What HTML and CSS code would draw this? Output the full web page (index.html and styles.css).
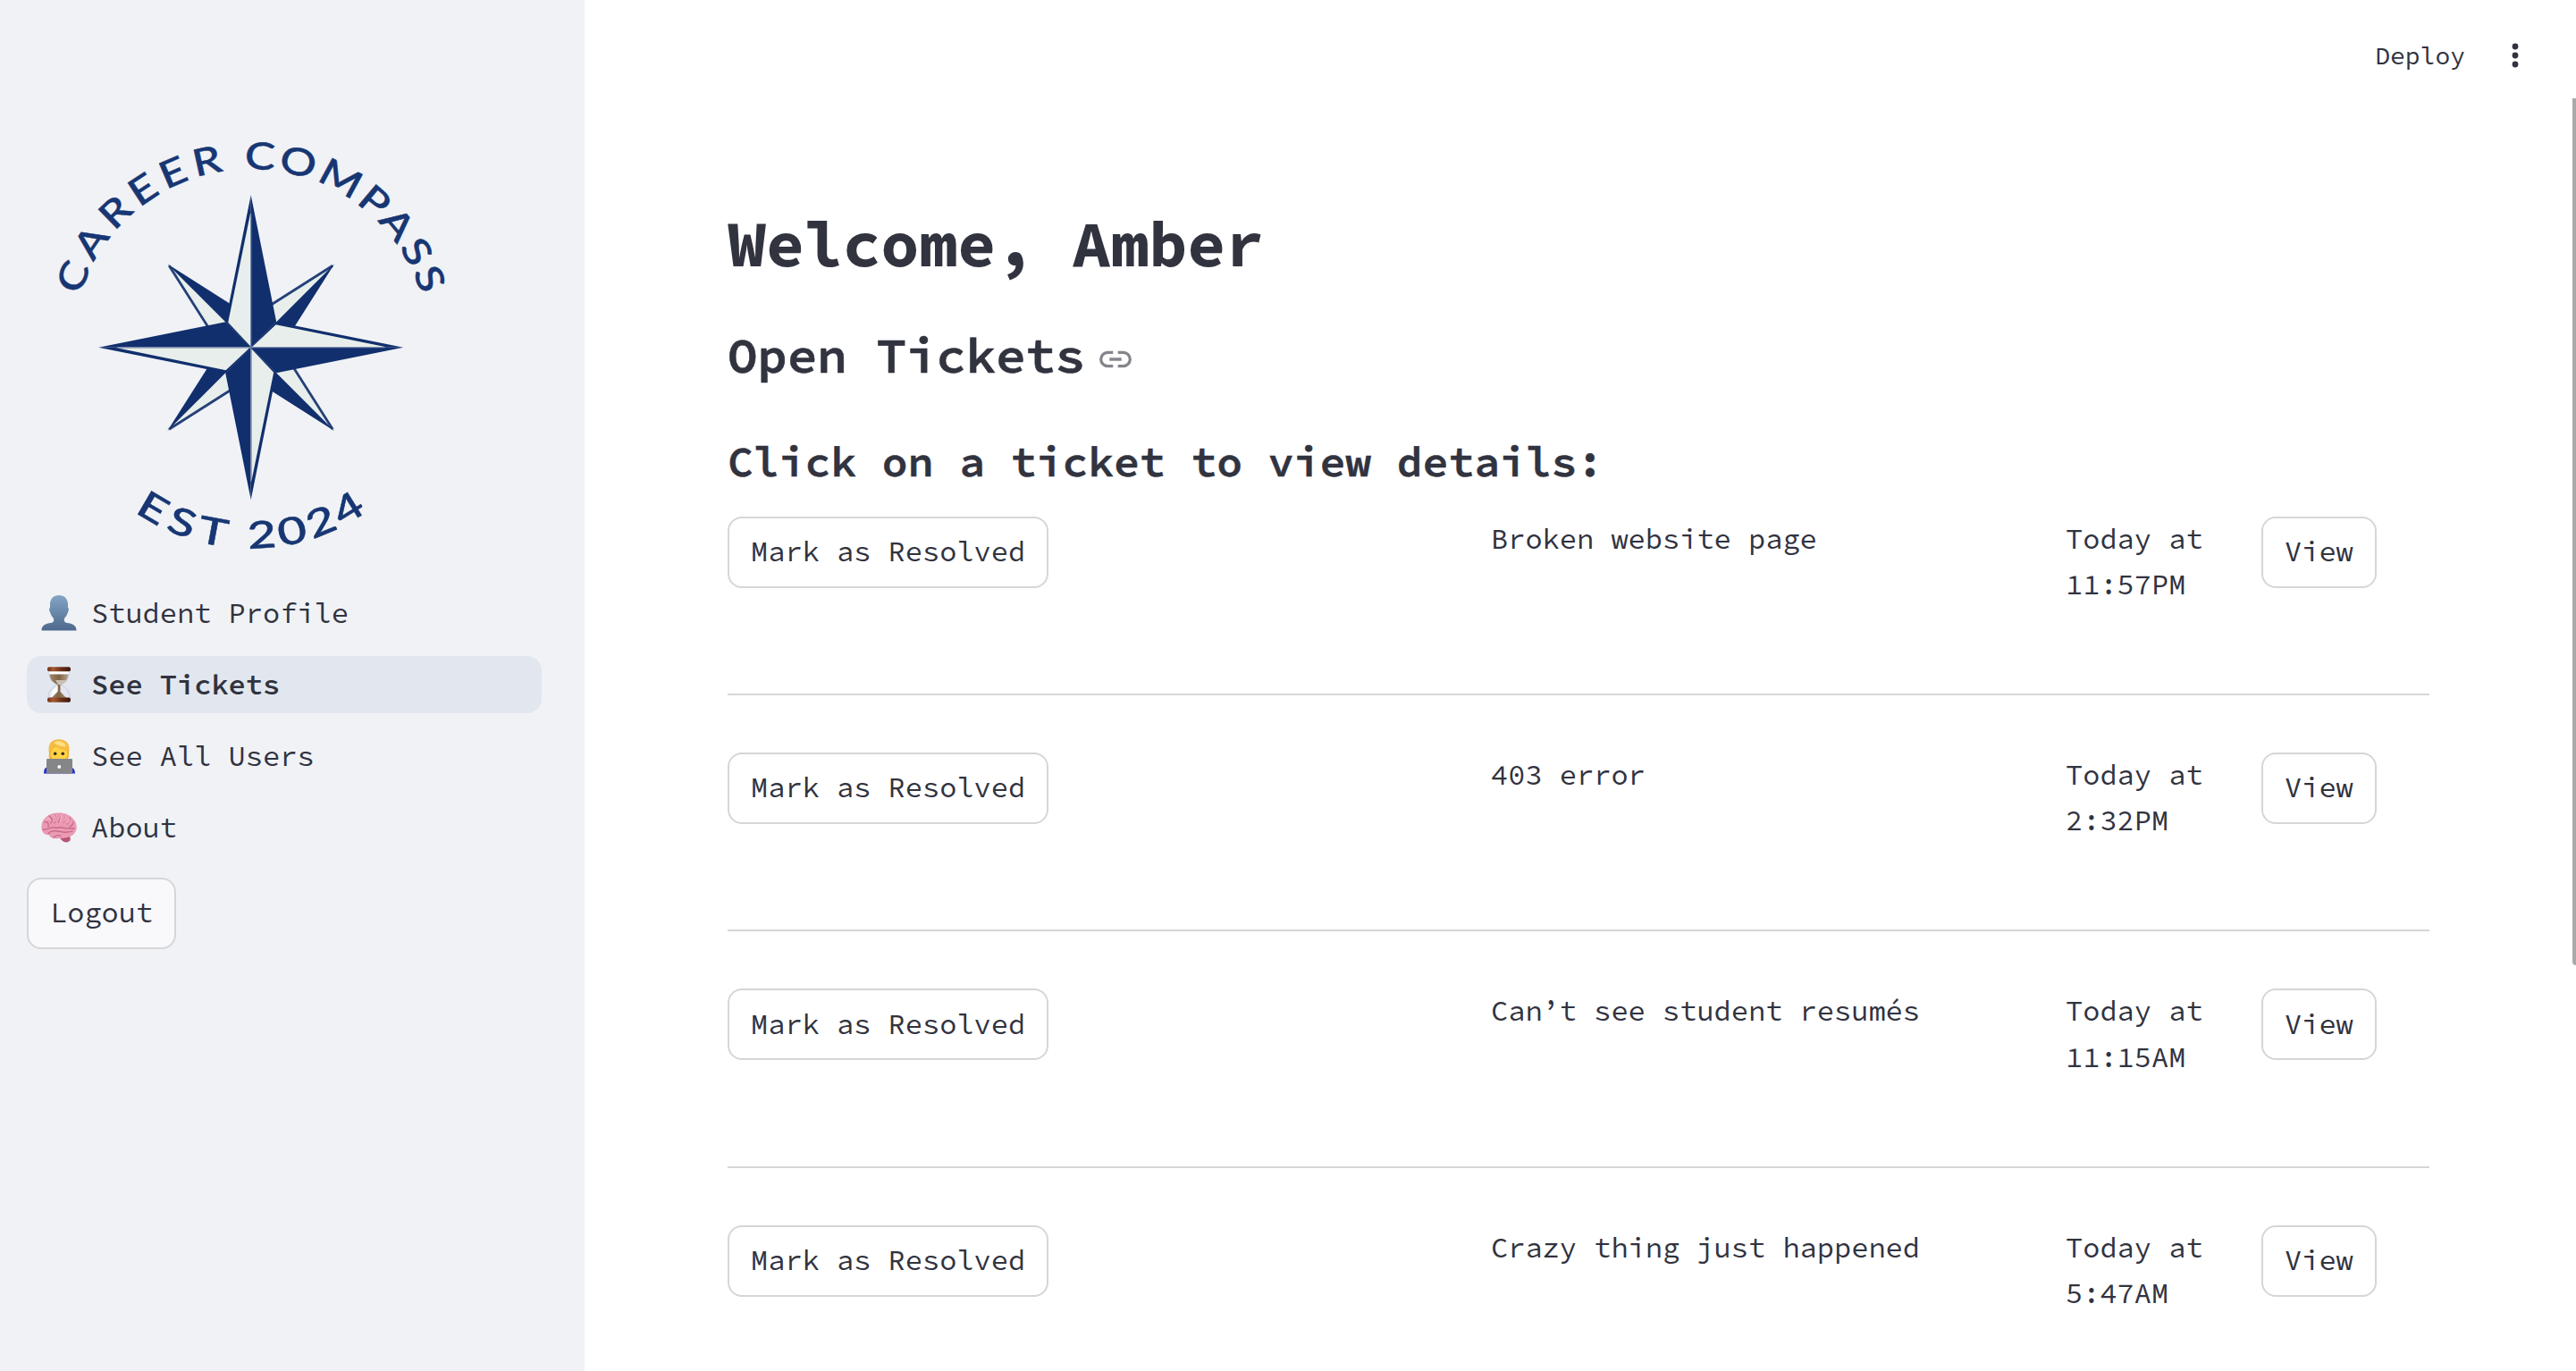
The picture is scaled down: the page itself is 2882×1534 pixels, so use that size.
FILE: index.html
```html
<!DOCTYPE html>
<html lang="en">
<head>
<meta charset="utf-8">
<title>Career Compass</title>
<link rel="stylesheet" href="styles.css">
</head>
<body>
<div class="app">
  <aside class="sidebar">
    <svg class="logo" viewBox="0 0 500 520" role="img" aria-label="Career Compass">
      <defs>
        <path id="arc-top" d="M57.7 201A199.500 199.500 0 0 1 443.800 217.200"/>
        <path id="arc-bottom" d="M118.700 442.300A225 225 0 0 0 387.200 436"/>
        <g id="minor">
          <path class="light" d="M0 0L-93.5 -93.5L-34 0Z"/>
          <path class="edge" d="M-34 -1L-91.5 -91.5"/>
          <path class="dark" d="M0 0L-93.5 -93.5L0 -34Z"/>
        </g>
        <g id="major">
          <path class="dark" d="M0 0V-170.5L-28.5 -28.5Z"/>
          <path class="light" d="M-.6 -1.5V-150L-25.5 -28Z"/>
          <path class="dark" d="M0 0V-170.5L28.5 -28.5Z"/>
          <path class="seam" d="M0 0V-150"/>
        </g>
      </defs>
      <g transform="translate(248.7 258.7)">
        <use href="#minor"/><use href="#minor" transform="rotate(90)"/><use href="#minor" transform="rotate(180)"/><use href="#minor" transform="rotate(270)"/>
        <use href="#major"/><use href="#major" transform="rotate(90)"/><use href="#major" transform="rotate(180)"/><use href="#major" transform="rotate(270)"/>
      </g>
      <text class="logo-text"><textPath href="#arc-top" startOffset="0" textLength="512" lengthAdjust="spacingAndGlyphs"><tspan class="loose">CAREER</tspan> COMPASS</textPath></text>
      <text class="logo-text"><textPath href="#arc-bottom" startOffset="0" textLength="281" lengthAdjust="spacingAndGlyphs"><tspan class="loose">EST</tspan> 2024</textPath></text>
    </svg>
    <nav class="nav">
      <a class="nav-item">
        <svg class="emoji" viewBox="0 0 40 40"><defs><linearGradient id="bust" x2="0" y2="1"><stop offset="0" stop-color="#84a5c5"/><stop offset="1" stop-color="#4d688c"/></linearGradient></defs><path fill="url(#bust)" d="M20 0C26 0 30 4 30 10v4c1.300 0 1 3 0 5-.8 3-2.500 5-4 7-.8 3 .5 4.500 3 5 6 .8 10.500 2.500 10.500 8.500H.5C.5 33.500 5 31.800 11 31c2.500-.5 3.800-2 3-5-1.500-2-3.200-4-4-7-1-2-1.300-5 0-5v-4C10 4 14 0 20 0Z"/></svg>
        <span>Student Profile</span></a>
      <a class="nav-item active">
        <svg class="emoji" viewBox="0 0 40 40"><defs><linearGradient id="wood"><stop offset="0" stop-color="#6d2f13"/><stop offset=".25" stop-color="#a65a31"/><stop offset=".6" stop-color="#6a3019"/><stop offset="1" stop-color="#3d190c"/></linearGradient><linearGradient id="sand"><stop offset="0" stop-color="#a18767"/><stop offset=".5" stop-color="#806444"/><stop offset="1" stop-color="#b1a48f"/></linearGradient></defs><path fill="#e4e7f3" stroke="#c5c9da" d="M9 5h22c0 8-2 12-9 15 7 4 10 8 10 15H8c0-7 3-11 10-15C11 17 9 13 9 5Z"/><path fill="url(#sand)" d="M9.500 8.500h21c-1 6-3 8.500-9 11.500v8l7 7h-17l7-7v-8c-6-3-8-5.500-9-11.500Z"/><path fill="#c9c1b5" d="M16 15h13c-2 3-4 4-7 5h-3Z"/><path fill="#fff" d="M9 5h22v3H9zM17 23l1.500-2v6l-7 7C11 29 13 25.500 17 23Z"/><rect x="7" y=".3" width="26" height="5" rx="2" fill="url(#wood)"/><rect x="7" y="34.500" width="26" height="5.200" rx="2" fill="url(#wood)"/></svg>
        <span>See Tickets</span></a>
      <a class="nav-item">
        <svg class="emoji" viewBox="0 0 40 40"><path fill="#2a32c8" d="M3 39.500c0-4 1-7 4-7h26c3 0 5 3 5 7Z"/><path fill="#efb335" d="M9 17C7 6 12 1 20 1.500 29 1 33 8 31 16c1 6-2 9-5 9H13c-4-1-5-4-4-8Z"/><ellipse cx="20" cy="17.500" rx="9.500" ry="8.500" fill="#ffd245"/><path fill="#f5bd43" d="M9 14C8 5 14 1.500 20 1.500c8 0 12 5 10.500 13C23 13 17 11 14 8c0 3-2 5-5 6Z"/><path fill="#ffdf82" d="M14 5c6-4 12-1 14 4-5 1-10-1-14-4Z"/><circle cx="15.700" cy="17.300" r="1.800" fill="#362719"/><circle cx="24.300" cy="17.300" r="1.800" fill="#362719"/><rect x="6" y="23" width="29" height="16.500" rx="1" fill="#858688"/><circle cx="20.300" cy="32" r="1.900" fill="#fff"/></svg>
        <span>See All Users</span></a>
      <a class="nav-item">
        <svg class="emoji" viewBox="0 0 40 40"><path fill="#b65676" d="M20 30c3 1 5-2 8-2 4 0 6 4 4 7-4 3-9 1-12-5Z"/><path fill="#eb9ab2" d="M20 3.500C10 3 1 9 .5 18c-.5 6 2 10 8 10 2 4 6 5 11 4 6 0 15-1 18-6 4-5 2-12-1-15C33 6 27 3.500 20 3.500Z"/><path fill="none" stroke="#c4668a" stroke-width="1.300" stroke-linecap="round" d="M4 14c3-1 5 1 4 5m1-12c3 2 4 5 2 8m4-9c2 3 2 6 0 9m6-10c1 4 0 7-2 9m8-8c1 4-1 6-2 8m7-5c1 3-1 5-3 7m7-2c0 3-2 4-4 5M2 22c5 1 8-3 13-2 3 1 5-1 9 0 4 2 8 0 13 1M8 27c2-3 5-4 10-3 4 0 7 2 10 1 3 0 5 0 7-1M14 31c2-2 5-3 8-2"/><path fill="none" stroke="#ffc6d3" stroke-linecap="round" d="M6 11c2-2 4-1 5 1m3-6c2 2 3 5 2 7m5-8c2 3 1 6 0 8m6-7c1 3 0 5-2 7m6-3c1 2 0 4-2 5"/></svg>
        <span>About</span></a>
    </nav>
    <button class="btn">Logout</button>
  </aside>
  <main class="main">
    <header class="toolbar">
      <span class="deploy">Deploy</span>
      <svg class="dots" viewBox="0 0 32 32"><circle cx="16" cy="6" r="3.400"/><circle cx="16" cy="16" r="3.400"/><circle cx="16" cy="26" r="3.400"/></svg>
    </header>
    <div class="scrollbar"></div>
    <section class="content">
      <h1 class="title">Welcome, Amber</h1>
      <h2 class="subtitle"><span>Open Tickets</span>
        <svg class="link" viewBox="0 0 36 40"><path d="M15.300 12.400h-6a7.600 7.600 0 0 0 0 15.200h6M20.700 12.400h6a7.600 7.600 0 0 1 0 15.200h-6M11.300 20h13.400"/></svg></h2>
      <h3 class="hint">Click on a ticket to view details:</h3>
      <div class="row"><div><button class="btn">Mark as Resolved</button></div><p>Broken website page</p><p>Today at 11:57PM</p><div><button class="btn">View</button></div></div>
      <hr class="rule">
      <div class="row"><div><button class="btn">Mark as Resolved</button></div><p>403 error</p><p>Today at 2:32PM</p><div><button class="btn">View</button></div></div>
      <hr class="rule">
      <div class="row"><div><button class="btn">Mark as Resolved</button></div><p>Can’t see student resumés</p><p>Today at 11:15AM</p><div><button class="btn">View</button></div></div>
      <hr class="rule">
      <div class="row"><div><button class="btn">Mark as Resolved</button></div><p>Crazy thing just happened</p><p>Today at 5:47AM</p><div><button class="btn">View</button></div></div>
    </section>
  </main>
</div>
</body>
</html>
```
FILE: styles.css
```css
* { box-sizing: border-box; }
body {
  margin: 0;
  color: #31333f;
  background: #fff;
  font-family: "Source Code Pro", "Liberation Mono", monospace;
  font-size: 32px;
  line-height: 51.2px;
}
.app { display: flex; height: 1534px; overflow: hidden; }

.sidebar { width: 654px; flex: none; padding: 130px 48px 0 30px; background: #f0f2f6; }
.logo { display: block; width: 500px; height: 520px; margin-left: 2px; }
.logo .dark { fill: #112f6d; }
.logo .light { fill: #e8eeeb; }
.logo .edge { fill: none; stroke: #254079; stroke-width: 2.8; }
.logo .seam { fill: none; stroke: #7f8fae; stroke-width: 1.2; }
.logo-text { fill: #173673; stroke: #173673; stroke-width: 0.5; font-family: Lato, sans-serif; font-size: 42px; font-weight: 500; letter-spacing: 3px; }
.logo-text .loose { letter-spacing: 5.5px; }

.nav { display: flex; flex-direction: column; gap: 16px; margin-top: 4px; }
.nav-item { display: flex; align-items: center; gap: 16px; height: 64px; padding: 0 16px; border-radius: 16px; }
.nav-item span { padding-top: 1px; }
.nav-item.active { background: #e2e7ef; font-weight: 600; }
.emoji { width: 40px; height: 40px; flex: none; }
.sidebar .btn { margin-top: 24px; background: #f9f9fc; }

.btn {
  display: inline-flex; align-items: center; justify-content: center;
  height: 80px; padding: 0 24px; border: 2px solid #d6d6d9; border-radius: 16px;
  background: #fff; color: inherit; font: inherit; white-space: nowrap;
}

.main { position: relative; flex: 1; }
.toolbar { display: flex; justify-content: flex-end; align-items: center; height: 124px; padding-right: 52px; }
.deploy { padding-top: 1px; font-size: 28px; }
.dots { width: 32px; height: 32px; margin-left: 40px; fill: #31333f; }
.scrollbar { position: absolute; right: 0; top: 110px; width: 4px; height: 970px; background: #a9a9ad; border-radius: 0 0 0 4px; }

.content { padding: 106px 164px 0 160px; }
.title, .subtitle, .hint { margin: 0; }
.title, .subtitle { letter-spacing: -0.005em; }
.title { font-size: 72px; line-height: 86px; font-weight: 700; }
.subtitle { display: flex; align-items: center; gap: 16px; margin-top: 48px; font-size: 56px; line-height: 67px; font-weight: 600; -webkit-text-stroke: 0.6px #31333f; }
.hint { margin-top: 57px; margin-bottom: 32.6px; font-size: 48px; line-height: 57px; font-weight: 600; -webkit-text-stroke: 0.5px #31333f; }
.link { width: 36px; height: 40px; margin-top: 8px; fill: none; stroke: #85868c; stroke-width: 3.300; overflow: visible; }

.row { display: grid; grid-template-columns: 822px 611px 187px 188px; column-gap: 32px; height: 134.4px; }
.row p { margin: 0; }
.row .btn { vertical-align: top; }
.rule { margin: 64px 0; border: 0; height: 2px; background: #d6d6d9; }
```
